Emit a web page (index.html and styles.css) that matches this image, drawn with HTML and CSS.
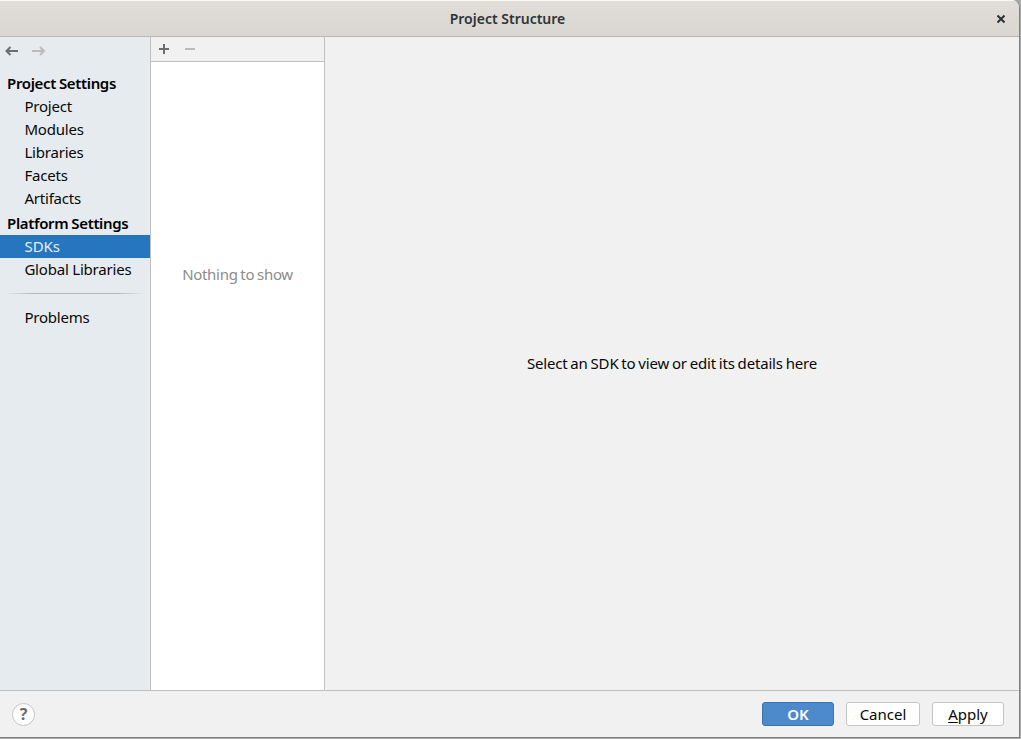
FILE: index.html
```html
<!DOCTYPE html>
<html lang="en">
<head>
<meta charset="utf-8">
<title>Project Structure</title>
<link rel="stylesheet" href="styles.css">
</head>
<body>
<div class="window">
  <header class="titlebar">
    <h1 class="title"><span>Project Structure</span></h1>
    <svg class="close" width="10" height="10" viewBox="0 0 10 10"><path d="M1.5 1.5 8.5 8.5M8.5 1.5 1.5 8.5"/></svg>
  </header>
  <main class="content">
    <nav class="sidebar">
      <div class="history">
        <svg width="14" height="12" viewBox="0 0 14 12"><path d="M13 6H1.5M5.5 2 1.5 6 5.5 10"/></svg>
        <svg class="off" width="14" height="12" viewBox="0 0 14 12"><path d="M0 6H12M8 2 12 6 8 10"/></svg>
      </div>
      <h2 class="group">Project Settings</h2>
      <a class="item">Project</a>
      <a class="item">Modules</a>
      <a class="item">Libraries</a>
      <a class="item">Facets</a>
      <a class="item">Artifacts</a>
      <h2 class="group second">Platform Settings</h2>
      <a class="item selected">SDKs</a>
      <a class="item">Global Libraries</a>
      <div class="separator"></div>
      <a class="item">Problems</a>
    </nav>
    <section class="list">
      <div class="toolbar">
        <svg width="10" height="10" viewBox="0 0 10 10"><path d="M0 5H10M5 0V10"/></svg>
        <svg class="off" width="10" height="10" viewBox="0 0 10 10"><path d="M0 5H10"/></svg>
      </div>
      <div class="empty">Nothing to show</div>
    </section>
    <section class="details"><span>Select an SDK to view or edit its details here</span></section>
  </main>
  <footer class="footer">
    <button class="help">?</button>
    <div class="actions">
      <button class="button primary">OK</button>
      <button class="button">Cancel</button>
      <button class="button"><span class="mnemonic">A</span>pply</button>
    </div>
  </footer>
</div>
</body>
</html>
```
FILE: styles.css
```css
* { box-sizing: border-box; }
body {
  margin: 0;
  width: 1021px;
  height: 739px;
  overflow: hidden;
  background: #a9a9a9;
  font: 15px/23px "Noto Sans", sans-serif;
  color: #080808;
}
h1, h2 { margin: 0; font-size: inherit; }
.window {
  width: 1020px;
  height: 738px;
  display: flex;
  flex-direction: column;
  border-right: 1px solid #808080;
  border-bottom: 1px solid #808080;
  border-radius: 0 8px 0 0;
  background: #f1f1f1;
  overflow: hidden;
}
.titlebar {
  flex: 0 0 37px;
  display: flex;
  align-items: center;
  padding-right: 13px;
  border-top: 1px solid #f8f8f7;
  border-bottom: 1px solid #bfb8b1;
  background: linear-gradient(#e1deda, #dad6d2);
}
.title {
  flex: 1;
  padding-left: 19px;
  text-align: center;
  font-size: 14px;
  font-weight: 600;
  color: #2e3436;
}
.close { fill: none; stroke: #2e3436; stroke-width: 2.1; }
.content { flex: 0 0 653px; display: flex; }
.sidebar {
  width: 151px;
  background: #e6ebef;
  border-right: 1px solid #bfbfbf;
}
.history { display: flex; gap: 13px; height: 35px; padding: 8px 5px; }
.history svg, .toolbar svg { fill: none; stroke: #6e6e6e; stroke-width: 2; }
.history .off, .toolbar .off { stroke: #bbb; }
.group {
  padding-left: 7px;
  font-weight: 600;
  letter-spacing: -0.35px;
  word-spacing: -0.5px;
  color: #000;
}
.second { margin-top: 2px; }
.item { display: block; padding-left: 24.4px; letter-spacing: -0.2px; }
.item.selected { background: #2675bf; color: #e4eef8; letter-spacing: 0; }
.separator {
  height: 1px;
  margin: 12px 5px;
  background: linear-gradient(to right, transparent, #b4b8bb 20%, #b4b8bb 80%, transparent);
}
.list { width: 174px; background: #fff; border-right: 1px solid #bfbfbf; }
.toolbar {
  display: flex;
  gap: 16px;
  height: 25px;
  padding: 7px 8px;
  background: #f1f1f1;
  border-bottom: 1px solid #bfbfbf;
}
.empty {
  padding-top: 201px;
  text-align: center;
  letter-spacing: -0.3px;
  word-spacing: -0.8px;
  color: #8c8c8c;
}
.details {
  flex: 1;
  display: flex;
  justify-content: center;
  align-items: center;
  letter-spacing: -0.17px;
  word-spacing: -0.9px;
}
.footer {
  flex: 1;
  display: flex;
  justify-content: space-between;
  align-items: center;
  padding: 0 15px 0 12px;
  border-top: 1px solid #bfbfbf;
}
.actions { display: flex; gap: 12px; }
.button, .help {
  padding: 0;
  font: inherit;
  color: #080808;
  background: #fff;
  border: 1px solid #c4c4c4;
}
.button { height: 24px; width: 72px; border-radius: 3px; line-height: 22px; }
.button:nth-child(2) { width: 74px; }
.button.primary { background: #4c8acb; border-color: #3b73b0; color: #fff; font-weight: 600; }
.mnemonic { text-decoration: underline; text-underline-offset: 2px; }
.help {
  width: 23px;
  height: 23px;
  border-radius: 50%;
  font-size: 16px;
  line-height: 21px;
  font-weight: 700;
  color: #6a6a6a;
}
```
